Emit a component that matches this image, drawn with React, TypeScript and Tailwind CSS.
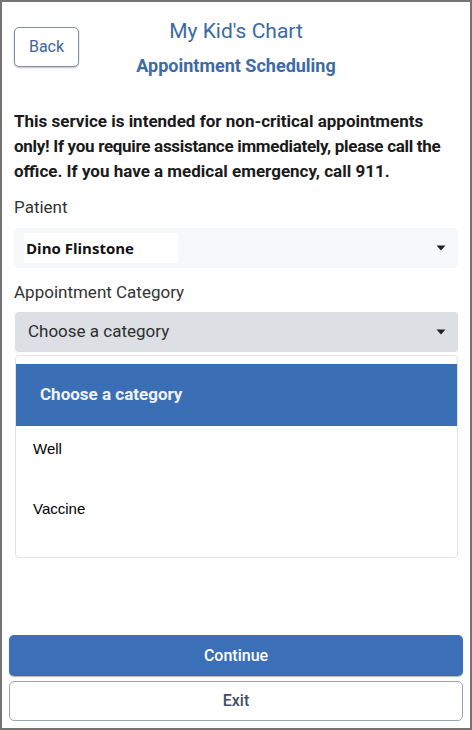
import React from "react";

function Caret() {
  return (
    <svg width="10" height="6" viewBox="0 0 10 6" className="shrink-0">
      <path d="M0.5 0.5 L9.5 0.5 L5 5.5 Z" fill="#222" />
    </svg>
  );
}

export default function App() {
  return (
    <div
      className="w-[472px] h-[730px] bg-white border-2 border-[#747474] flex flex-col box-border"
      style={{ fontFamily: "Roboto, 'Noto Sans', sans-serif" }}
    >
      <div className="px-[12px] flex flex-col flex-1">
        {/* Header */}
        <div className="grid grid-cols-[1fr_auto_1fr] pt-[15px]">
          <div className="pt-[10px]">
            <button className="w-[65px] h-[40px] rounded-[5px] border border-[#7f90a8] shadow-[0_1px_2px_rgba(0,0,0,0.25)] text-[#3d6699] text-[16px] bg-white">
              Back
            </button>
          </div>
          <div className="flex flex-col items-center">
            <div className="text-[21px] leading-[28px] text-[#3b6aa5]">My Kid's Chart</div>
            <div className="text-[18px] leading-[26px] font-bold text-[#3b6aa5] mt-[8px]">
              Appointment Scheduling
            </div>
          </div>
          <div />
        </div>

        {/* Warning */}
        <p className="mt-[30px] text-[17px] leading-[25px] font-bold text-[#1a1a1a] whitespace-nowrap">
          <span className="block">This service is intended for non-critical appointments</span>
          <span className="block tracking-[-0.3px]">
            only! If you require assistance immediately, please call the
          </span>
          <span className="block">office. If you have a medical emergency, call 911.</span>
        </p>

        <div className="mt-[11px] text-[17px] leading-[24px] text-[#333]">Patient</div>
        <div className="mt-[9px] h-[40px] bg-[#f7f8fa] rounded-[4px] flex items-center pl-[10px] pr-[12px]">
          <div
            className="bg-white w-[154px] h-[30px] flex items-center pl-[2px] text-[15px] font-bold text-[#111]"
            style={{ fontFamily: "'Open Sans', 'Noto Sans', sans-serif" }}
          >
            Dino Flinstone
          </div>
          <div className="flex-1" />
          <Caret />
        </div>

        <div className="mt-[12px] text-[17px] leading-[24px] text-[#333]">Appointment Category</div>
        <div className="mt-[8px] ml-[1px] h-[40px] bg-[#dcdfe3] rounded-[4px] flex items-center pl-[13px] pr-[12px] text-[17px] text-[#2e2e2e]">
          <span className="flex-1">Choose a category</span>
          <Caret />
        </div>

        {/* Dropdown */}
        <div className="mt-[3px] ml-[1px] h-[203px] border border-[#dfe3e8] rounded-[4px] pt-[8px] bg-white">
          <div className="h-[62px] bg-[#3b6fb5] flex items-center pl-[24px] text-[17px] font-bold text-[#eef3fa]">
            Choose a category
          </div>
          <div
            className="h-[60px] pt-[14px] pl-[17px] text-[15px] leading-[18px] text-black"
            style={{ fontFamily: "'Liberation Sans', Arial, sans-serif" }}
          >
            Well
          </div>
          <div
            className="h-[60px] pt-[14px] pl-[17px] text-[15px] leading-[18px] text-black"
            style={{ fontFamily: "'Liberation Sans', Arial, sans-serif" }}
          >
            Vaccine
          </div>
        </div>

        <div className="flex-1" />
      </div>

      {/* Bottom buttons */}
      <div className="px-[7px] pb-[7px] flex flex-col gap-[5px]">
        <button className="h-[41px] w-full rounded-[5px] bg-[#3b6fb8] text-white text-[16px] font-medium shadow-[0_1px_1px_rgba(0,0,0,0.3)]">
          Continue
        </button>
        <button className="h-[40px] w-[454px] rounded-[5px] border-[1.5px] border-[#9aa3b0] bg-white text-[#3f4f66] text-[16px] font-medium">
          Exit
        </button>
      </div>
    </div>
  );
}
